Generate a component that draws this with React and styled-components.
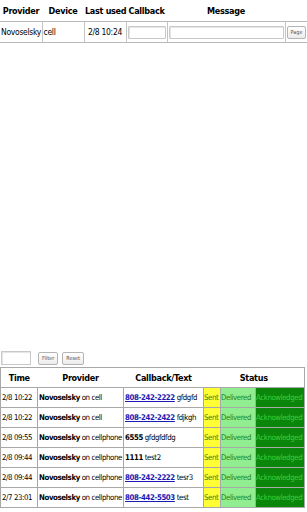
import React from "react";
import styled, { createGlobalStyle } from "styled-components";

const GlobalStyle = createGlobalStyle`
  html, body {
    margin: 0;
    padding: 0;
    background: #ffffff;
  }
  body {
    font-family: "DejaVu Sans Condensed", "DejaVu Sans", sans-serif;
    font-stretch: condensed;
    font-size: 8.5px;
    letter-spacing: -0.3px;
    color: #000;
  }
`;

const messages = [
  { time: "2/8 10:22", device: "cell", callback: "808-242-2222", link: true, text: "gfdgfd" },
  { time: "2/8 10:22", device: "cell", callback: "808-242-2422", link: true, text: "fdjkgh" },
  { time: "2/8 09:55", device: "cellphone", callback: "6555", link: false, text: "gfdgfdfdg" },
  { time: "2/8 09:44", device: "cellphone", callback: "1111", link: false, text: "test2" },
  { time: "2/8 09:44", device: "cellphone", callback: "808-242-2222", link: true, text: "tesr3" },
  { time: "2/7 23:01", device: "cellphone", callback: "808-442-5503", link: true, text: "test" },
];

function App() {
  return (
    <Page>
      <GlobalStyle />
      <PageTable>
        <colgroup>
          <col style={{ width: 42 }} />
          <col style={{ width: 42 }} />
          <col style={{ width: 42 }} />
          <col style={{ width: 41 }} />
          <col />
          <col style={{ width: 22 }} />
        </colgroup>
        <thead>
          <tr>
            <Th>Provider</Th>
            <Th>Device</Th>
            <Th>Last used</Th>
            <Th>Callback</Th>
            <Th>Message</Th>
            <Th />
          </tr>
        </thead>
        <tbody>
          <tr>
            <Td>Novoselsky</Td>
            <Td>cell</Td>
            <Td align="center">2/8 10:24</Td>
            <Td>
              <TextBox />
            </Td>
            <Td>
              <TextBox />
            </Td>
            <Td align="center">
              <SmallButton>Page</SmallButton>
            </Td>
          </tr>
        </tbody>
      </PageTable>

      <Spacer />

      <FilterBar>
        <FilterInput />
        <SmallButton>Filter</SmallButton>
        <SmallButton>Reset</SmallButton>
      </FilterBar>

      <LogTable>
        <colgroup>
          <col style={{ width: 37 }} />
          <col style={{ width: 86 }} />
          <col style={{ width: 80 }} />
          <col style={{ width: 17 }} />
          <col style={{ width: 35 }} />
          <col />
        </colgroup>
        <thead>
          <tr>
            <LogTh>Time</LogTh>
            <LogTh>Provider</LogTh>
            <LogTh>Callback/Text</LogTh>
            <LogTh colSpan={3}>Status</LogTh>
          </tr>
        </thead>
        <tbody>
          {messages.map((m, i) => (
            <tr key={i}>
              <LogTd>{m.time}</LogTd>
              <LogTd>
                <b>Novoselsky</b> on {m.device}
              </LogTd>
              <LogTd>
                {m.link ? <Phone href="#">{m.callback}</Phone> : <b>{m.callback}</b>} {m.text}
              </LogTd>
              <StatusTd kind="sent">Sent</StatusTd>
              <StatusTd kind="delivered">Delivered</StatusTd>
              <StatusTd kind="ack">Acknowledged</StatusTd>
            </tr>
          ))}
        </tbody>
      </LogTable>
    </Page>
  );
}

export default App;

const Page = styled.div`
  width: 307px;
  height: 512px;
  display: flex;
  flex-direction: column;
  overflow: hidden;
`;

const PageTable = styled.table`
  width: 307px;
  border-collapse: collapse;
  table-layout: fixed;
`;

const Th = styled.th`
  height: 21px;
  padding: 0 1px;
  font-size: 9px;
  font-weight: bold;
  text-align: center;
  border-bottom: 1px solid #b8b8b8;
  white-space: nowrap;
`;

const Td = styled.td`
  height: 20px;
  padding: 0 1px;
  text-align: ${(p) => p.align || "left"};
  border-right: 1px solid #c4c4c4;
  border-bottom: 1px solid #b8b8b8;
  white-space: nowrap;
  &:last-child {
    border-right: none;
  }
`;

const TextBox = styled.input`
  box-sizing: border-box;
  display: block;
  width: 100%;
  height: 13px;
  margin: 0;
  border: 1px solid #c8c8c8;
  border-radius: 1px;
  background: #fff;
  box-shadow: inset 1px 1px 1px #e4e4e4;
`;

const SmallButton = styled.button`
  height: 13px;
  padding: 0 3px;
  margin: 0;
  font-family: inherit;
  font-size: 5.5px;
  letter-spacing: 0;
  color: #555;
  background: linear-gradient(#ffffff, #ececec);
  border: 1px solid #b4b4b4;
  border-radius: 2px;
`;

const Spacer = styled.div`
  flex: 1;
`;

const FilterBar = styled.div`
  display: flex;
  align-items: center;
  gap: 4px;
  padding: 0 0 2px 1px;
  height: 14px;
  & > button {
    margin-left: 3px;
  }
  & > button + button {
    margin-left: 0;
  }
`;

const FilterInput = styled.input`
  box-sizing: border-box;
  width: 30px;
  height: 14px;
  margin: 0;
  border: 1px solid #c8c8c8;
  box-shadow: inset 1px 1px 1px #e4e4e4;
`;

const LogTable = styled.table`
  width: 305px;
  margin-bottom: 4px;
  border-collapse: collapse;
  table-layout: fixed;
  border: 1px solid #a8a8a8;
`;

const LogTh = styled.th`
  height: 19px;
  padding: 0 1px;
  font-size: 9px;
  font-weight: bold;
  text-align: center;
  border-bottom: 1px solid #a8a8a8;
  white-space: nowrap;
`;

const LogTd = styled.td`
  height: 19px;
  padding: 0 1px;
  font-size: 7.8px;
  letter-spacing: -0.4px;
  border: 1px solid #a8a8a8;
  white-space: nowrap;
  overflow: hidden;
`;

const statusColors = {
  sent: { bg: "#ffff33", fg: "#238a23" },
  delivered: { bg: "#90ee90", fg: "#1f861f" },
  ack: { bg: "#0b860b", fg: "#3ccf3c" },
};

const StatusTd = styled(LogTd)`
  padding: 0;
  background: ${(p) => statusColors[p.kind].bg};
  color: ${(p) => statusColors[p.kind].fg};
`;

const Phone = styled.a`
  font-weight: bold;
  color: #1a1ab4;
  text-decoration: underline;
`;
